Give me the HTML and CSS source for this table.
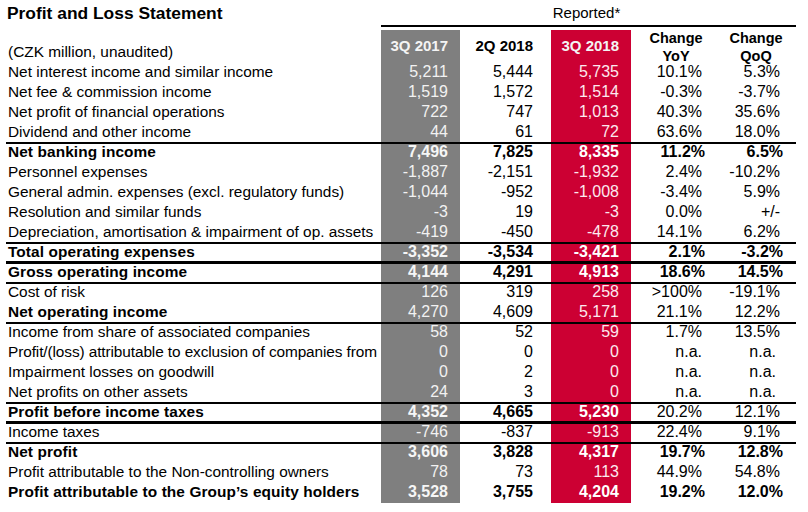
FILE: index.html
```html
<!DOCTYPE html>
<html lang="en">
<head>
<meta charset="utf-8">
<title>Profit and Loss Statement</title>
<link rel="stylesheet" href="styles.css">
</head>
<body>
<div class="sheet">
  <div class="top">
    <h1 class="title">Profit and Loss Statement</h1>
    <div class="reported">Reported*</div>
  </div>
  <div class="topline"><div class="topline-bar"></div></div>
  <div class="gap"><span></span><span class="g"></span><span></span><span class="r"></span></div>

  <div class="row head">
    <div class="lbl unit">(CZK million, unaudited)</div>
    <div class="c g">3Q 2017</div>
    <div class="c w">2Q 2018</div>
    <div class="c r">3Q 2018</div>
    <div class="chg yoy"><span class="l1">Change</span><span class="l2">YoY</span></div>
    <div class="chg qoq"><span class="l1">Change</span><span class="l2">QoQ</span></div>
  </div>

  <div class="row"><div class="lbl">Net interest income and similar income</div><div class="c g">5,211</div><div class="c w">5,444</div><div class="c r">5,735</div><div class="p y">10.1%</div><div class="p q">5.3%</div></div>
  <div class="row"><div class="lbl">Net fee &amp; commission income</div><div class="c g">1,519</div><div class="c w">1,572</div><div class="c r">1,514</div><div class="p y">-0.3%</div><div class="p q">-3.7%</div></div>
  <div class="row"><div class="lbl">Net profit of financial operations</div><div class="c g">722</div><div class="c w">747</div><div class="c r">1,013</div><div class="p y">40.3%</div><div class="p q">35.6%</div></div>
  <div class="row"><div class="lbl">Dividend and other income</div><div class="c g">44</div><div class="c w">61</div><div class="c r">72</div><div class="p y">63.6%</div><div class="p q">18.0%</div></div>
  <div class="row rule bold"><div class="lbl">Net banking income</div><div class="c g">7,496</div><div class="c w">7,825</div><div class="c r">8,335</div><div class="p y">11.2%</div><div class="p q">6.5%</div></div>
  <div class="row"><div class="lbl">Personnel expenses</div><div class="c g">-1,887</div><div class="c w">-2,151</div><div class="c r">-1,932</div><div class="p y">2.4%</div><div class="p q">-10.2%</div></div>
  <div class="row"><div class="lbl">General admin. expenses (excl. regulatory funds)</div><div class="c g">-1,044</div><div class="c w">-952</div><div class="c r">-1,008</div><div class="p y">-3.4%</div><div class="p q">5.9%</div></div>
  <div class="row"><div class="lbl">Resolution and similar funds</div><div class="c g">-3</div><div class="c w">19</div><div class="c r">-3</div><div class="p y">0.0%</div><div class="p q">+/-</div></div>
  <div class="row"><div class="lbl">Depreciation, amortisation &amp; impairment of op. assets</div><div class="c g">-419</div><div class="c w">-450</div><div class="c r">-478</div><div class="p y">14.1%</div><div class="p q">6.2%</div></div>
  <div class="row rule bold"><div class="lbl">Total operating expenses</div><div class="c g">-3,352</div><div class="c w">-3,534</div><div class="c r">-3,421</div><div class="p y">2.1%</div><div class="p q">-3.2%</div></div>
  <div class="row rule thick bold"><div class="lbl">Gross operating income</div><div class="c g">4,144</div><div class="c w">4,291</div><div class="c r">4,913</div><div class="p y">18.6%</div><div class="p q">14.5%</div></div>
  <div class="row rule"><div class="lbl">Cost of risk</div><div class="c g">126</div><div class="c w">319</div><div class="c r">258</div><div class="p y">&gt;100%</div><div class="p q">-19.1%</div></div>
  <div class="row"><div class="lbl b">Net operating income</div><div class="c g">4,270</div><div class="c w">4,609</div><div class="c r">5,171</div><div class="p y">21.1%</div><div class="p q">12.2%</div></div>
  <div class="row rule"><div class="lbl">Income from share of associated companies</div><div class="c g">58</div><div class="c w">52</div><div class="c r">59</div><div class="p y">1.7%</div><div class="p q">13.5%</div></div>
  <div class="row"><div class="lbl fit">Profit/(loss) attributable to exclusion of companies from</div><div class="c g">0</div><div class="c w">0</div><div class="c r">0</div><div class="p y">n.a.</div><div class="p q na">n.a.</div></div>
  <div class="row"><div class="lbl">Impairment losses on goodwill</div><div class="c g">0</div><div class="c w">2</div><div class="c r">0</div><div class="p y">n.a.</div><div class="p q na">n.a.</div></div>
  <div class="row"><div class="lbl">Net profits on other assets</div><div class="c g">24</div><div class="c w">3</div><div class="c r">0</div><div class="p y">n.a.</div><div class="p q na">n.a.</div></div>
  <div class="row rule"><div class="lbl b">Profit before income taxes</div><div class="c g b">4,352</div><div class="c w b">4,665</div><div class="c r b">5,230</div><div class="p y">20.2%</div><div class="p q">12.1%</div></div>
  <div class="row rule thick"><div class="lbl">Income taxes</div><div class="c g">-746</div><div class="c w">-837</div><div class="c r">-913</div><div class="p y">22.4%</div><div class="p q">9.1%</div></div>
  <div class="row rule bold"><div class="lbl">Net profit</div><div class="c g">3,606</div><div class="c w">3,828</div><div class="c r">4,317</div><div class="p y">19.7%</div><div class="p q">12.8%</div></div>
  <div class="row"><div class="lbl">Profit attributable to the Non-controlling owners</div><div class="c g">78</div><div class="c w">73</div><div class="c r">113</div><div class="p y">44.9%</div><div class="p q">54.8%</div></div>
  <div class="row bold last"><div class="lbl">Profit attributable to the Group’s equity holders</div><div class="c g">3,528</div><div class="c w">3,755</div><div class="c r">4,204</div><div class="p y">19.2%</div><div class="p q">12.0%</div></div>
</div>
</body>
</html>
```

FILE: styles.css
```css
html, body {
  margin: 0;
  padding: 0;
  background: #ffffff;
}

body {
  font-family: "Liberation Sans", Arial, sans-serif;
  color: #000;
}

.sheet {
  width: 790px;
  margin-left: 6px;
}

.top,
.topline,
.gap,
.row {
  display: grid;
  grid-template-columns: 375px 79px 91px 80px 82px 83px;
}

.top {
  height: 25px;
}

.title {
  grid-column: 1 / 2;
  margin: 0;
  padding: 3px 0 0 1px;
  font-size: 17.4px;
  font-weight: bold;
  line-height: 20px;
  white-space: nowrap;
}

.reported {
  grid-column: 2 / 7;
  text-align: center;
  font-size: 15px;
  line-height: 18px;
  padding-top: 4px;
  padding-right: 4px;
}

.topline {
  height: 2px;
}

.topline-bar {
  grid-column: 2 / 7;
  background: #000;
}

.gap {
  height: 3px;
}

.row {
  height: 20px;
  grid-template-rows: 20px;
  position: relative;
  font-size: 16px;
  line-height: 20px;
}

.row.head {
  height: 32px;
  grid-template-rows: 32px;
}

.row.last {
  height: 21px;
  grid-template-rows: 21px;
}

.row.rule::before {
  content: "";
  position: absolute;
  left: 0;
  right: 0;
  top: 0;
  height: 2px;
  background: #000;
  z-index: 2;
}

.row.thick::before {
  top: -1px;
  height: 3px;
}

.lbl {
  font-size: 15.4px;
  padding-left: 2px;
  white-space: nowrap;
  overflow: hidden;
}

.lbl.fit {
  letter-spacing: -0.1px;
}

.lbl.unit {
  align-self: end;
  line-height: 20px;
}

.c {
  text-align: right;
  white-space: nowrap;
}

.c.g {
  background: #7f7f7f;
  color: #f2f2f2;
  padding-right: 12px;
}

.c.w {
  padding-right: 18px;
}

.c.r {
  background: #cc0033;
  color: #fde9ee;
  padding-right: 12px;
}

.p {
  text-align: right;
  white-space: nowrap;
}

.p.y {
  padding-right: 11px;
}

.p.q {
  padding-right: 16px;
}

.p.q.na {
  padding-right: 20px;
}

.head .c {
  font-weight: bold;
  font-size: 15px;
  line-height: 32px;
}

.head .c.g,
.head .c.r {
  color: #f4f4f4;
}

.chg {
  display: flex;
  flex-direction: column;
  align-items: center;
  font-weight: bold;
  font-size: 14.5px;
}

.chg .l1 {
  line-height: 16px;
  height: 16px;
}

.chg .l2 {
  line-height: 14px;
  height: 14px;
  margin-top: 3px;
}

.chg.yoy {
  padding-left: 8px;
}

.chg.qoq {
  padding-left: 3px;
}

.bold .lbl,
.lbl.b,
.bold .c,
.c.b,
.bold .p {
  font-weight: bold;
}

.bold .lbl,
.lbl.b {
  letter-spacing: 0.1px;
}

.bold .c.g,
.c.g.b {
  color: #f6f6f6;
}

.bold .c.r,
.c.r.b {
  color: #ffffff;
}

.bold .p.y {
  padding-right: 8px;
}

.bold .p.q {
  padding-right: 13px;
}
```
